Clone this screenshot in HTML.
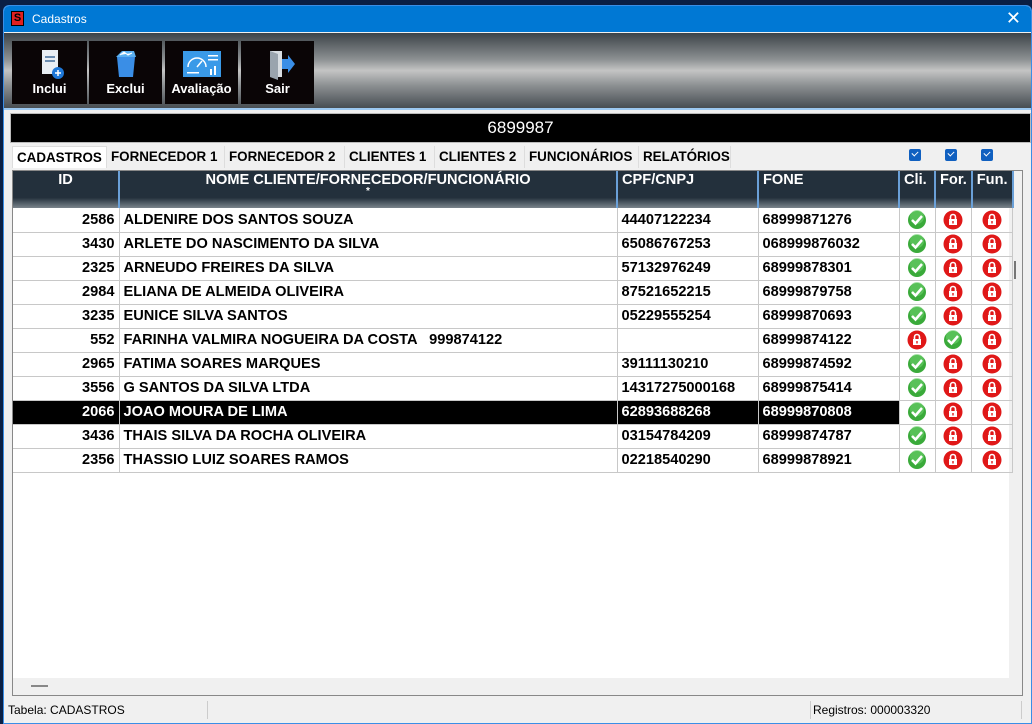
<!DOCTYPE html>
<html><head><meta charset="utf-8"><style>
*{margin:0;padding:0;box-sizing:border-box}
body{width:1032px;height:724px;background:#0a1f44;position:relative;overflow:hidden;font-family:"Liberation Sans",sans-serif}
.win{position:absolute;left:3px;top:5px;width:1029px;height:719px;background:#f0f0f0;border:1px solid #3a8ee6;border-radius:6px 6px 0 0;overflow:hidden}
.title{position:absolute;left:0;top:0;right:0;height:26px;background:#0078d4;color:#fff;font-size:12px}
.title span{position:absolute;left:28px;top:6px}
.logo{position:absolute;left:7px;top:5px;width:13px;height:15px;background:#e02020;border:1px solid #000;color:#000;font-size:11px;font-weight:bold;text-align:center;line-height:13px}
.close{position:absolute;right:10px;top:2px;font-size:18px;color:#fff}
.tb{position:absolute;left:0;top:27px;width:1027px;height:77px;background:linear-gradient(#3c4348,#8c9092 35%,#c4c4c4 50%,#8c9092 70%,#474d52);border-bottom:2px solid #9cc8f0}
.btn{position:absolute;top:8px;height:63px;background:#0a0506;color:#fff;font-weight:bold;font-size:13px;text-align:center}
.btn b{position:absolute;bottom:8px;left:0;right:0}
.btn svg{position:absolute;top:8px;left:50%;margin-left:-18px}
.bar{position:absolute;left:6px;top:107px;width:1021px;height:30px;background:#000;border:1px solid #bbb;color:#fff;font-size:17px;text-align:center;line-height:28px}
.tabs{position:absolute;left:8px;top:140px;height:22px;font-size:13.4px;font-weight:bold;color:#000}
.tab{position:absolute;top:0;height:22px;background:#f0f0f0;border-right:1px solid #ddd;line-height:22px;padding-left:4px;white-space:nowrap}
.chk{position:absolute;top:143px;width:12px;height:12px;background:#1060c0;border-radius:2px}
.chk:after{content:"";position:absolute;left:3px;top:2px;width:5px;height:3px;border-left:1.5px solid #fff;border-bottom:1.5px solid #fff;transform:rotate(-45deg)}
.grid{position:absolute;left:8px;top:164px;width:1011px;height:526px;background:#f0f0f0;border:1px solid #888}
.white{position:absolute;left:0;top:0;width:996px;height:507px;background:#fff}
table{position:absolute;left:0;top:0;border-collapse:collapse;table-layout:fixed;font-size:14.6px;font-weight:bold}
th{background:linear-gradient(#23303c 72%,#7a848c);color:#fff;height:37px;vertical-align:top;text-align:left;padding:1px 4px;border-right:2px solid #6aa0d8;font-size:14.6px;position:relative;font-weight:bold}
td{height:24px;border-right:1px solid #c8c8c8;border-bottom:1px solid #c8c8c8;padding:0 4px;white-space:nowrap;overflow:hidden}
td.r{text-align:right}
td.c{text-align:center;padding:0}
tr.sel td:nth-child(-n+4){background:#000;color:#fff}
td svg{vertical-align:middle}
.sb{position:absolute;left:4px;top:697px;font-size:12px;color:#000}
.sep{position:absolute;top:695px;width:1px;height:18px;background:#ccc}
</style></head><body>
<div class="win">
<div class="title"><div class="logo">S</div><span>Cadastros</span><div class="close">✕</div></div>
<div class="tb">
 <div class="btn" style="left:8px;width:75px"><svg width="36" height="32"><rect x="10" y="1" width="16" height="24" fill="#e8eef4"/><rect x="13" y="7" width="10" height="2" fill="#6a8cb0"/><rect x="13" y="11" width="10" height="2" fill="#6a8cb0"/><circle cx="26" cy="24" r="6" fill="#1e78d8"/><path d="M23 24h6M26 21v6" stroke="#fff" stroke-width="1.5"/></svg><b>Inclui</b></div>
 <div class="btn" style="left:85px;width:73px"><svg width="36" height="32"><path d="M9 8h18l-2 20H11z" fill="#3a8ee6"/><path d="M8 8l6-6h12l2 6" fill="#5ab0f0"/><path d="M12 6l4-3 4 3 4-2" stroke="#fff" fill="#fff"/></svg><b>Exclui</b></div>
 <div class="btn" style="left:161px;width:73px"><svg width="40" height="30" style="margin-left:-20px"><rect x="1" y="2" width="38" height="26" fill="#3a9ae8"/><path d="M6 18a9 9 0 0 1 18 0" stroke="#fff" fill="none" stroke-width="1.5"/><path d="M15 18l5-6" stroke="#fff" stroke-width="1.5"/><rect x="26" y="6" width="10" height="1.5" fill="#fff"/><rect x="26" y="10" width="10" height="1.5" fill="#fff"/><rect x="28" y="20" width="2" height="6" fill="#fff"/><rect x="32" y="17" width="2" height="9" fill="#fff"/><rect x="5" y="23" width="12" height="1.5" fill="#fff"/></svg><b>Avaliação</b></div>
 <div class="btn" style="left:237px;width:73px"><svg width="36" height="32"><path d="M10 2h12v26H10z" fill="#d8dde2"/><path d="M10 2l8 3v26l-8-3z" fill="#9aa4ae"/><path d="M22 10h6v-4l7 9-7 9v-4h-6z" fill="#3a8ee6"/></svg><b>Sair</b></div>
</div>
<div class="bar">6899987</div>
<div class="tabs">
 <div class="tab" style="left:0;width:95px;background:#fff;border:1px solid #ddd;border-bottom:none">CADASTROS</div>
 <div class="tab" style="left:95px;width:118px">FORNECEDOR 1</div>
 <div class="tab" style="left:213px;width:120px">FORNECEDOR 2</div>
 <div class="tab" style="left:333px;width:90px">CLIENTES 1</div>
 <div class="tab" style="left:423px;width:90px">CLIENTES 2</div>
 <div class="tab" style="left:513px;width:114px">FUNCIONÁRIOS</div>
 <div class="tab" style="left:627px;width:92px">RELATÓRIOS</div>
</div>
<div class="chk" style="left:905px"></div><div class="chk" style="left:941px"></div><div class="chk" style="left:977px"></div>
<div class="grid">
<div class="white"></div>
<table>
<colgroup><col style="width:106px"><col style="width:498px"><col style="width:141px"><col style="width:141px"><col style="width:36px"><col style="width:36px"><col style="width:36px"></colgroup>
<tr><th style="text-align:center">ID</th><th style="text-align:center">NOME CLIENTE/FORNECEDOR/FUNCIONÁRIO<div style="font-size:10px;line-height:8px">*</div></th><th>CPF/CNPJ</th><th>FONE</th><th>Cli.</th><th>For.</th><th>Fun.</th></tr>
<tbody id="b"></tbody>
</table>
</div>
<div style="position:absolute;left:27px;top:679px;width:17px;height:2px;background:#888"></div>
<div class="sb">Tabela: CADASTROS</div>
<div class="sep" style="left:203px"></div><div class="sep" style="left:806px"></div><div class="sep" style="left:1017px"></div>
<div class="sb" style="left:809px">Registros: 000003320</div>
<div style="position:absolute;left:1010px;top:255px;width:2px;height:18px;background:#777"></div>
</div>
<script>
var G='<svg width="20" height="20"><circle cx="10" cy="10" r="9" fill="#3aaa3a"/><circle cx="10" cy="7" r="7" fill="#6cd06c" opacity=".6"/><path d="M5 10l3.5 3.5L15 6" stroke="#fff" stroke-width="2.5" fill="none"/></svg>';
var R='<svg width="20" height="20"><circle cx="10" cy="10" r="9.5" fill="#e01818"/><path d="M7.5 9V7a2.5 2.5 0 0 1 5 0v2" stroke="#fff" stroke-width="1.6" fill="none"/><rect x="6" y="9" width="8" height="6" fill="#fff"/><rect x="9.3" y="11" width="1.4" height="2.5" fill="#e01818"/></svg>';
var d=[["2586","ALDENIRE DOS SANTOS SOUZA","44407122234","68999871276",G,R,R],
["3430","ARLETE DO NASCIMENTO DA SILVA","65086767253","068999876032",G,R,R],
["2325","ARNEUDO FREIRES DA SILVA","57132976249","68999878301",G,R,R],
["2984","ELIANA DE ALMEIDA OLIVEIRA","87521652215","68999879758",G,R,R],
["3235","EUNICE SILVA SANTOS","05229555254","68999870693",G,R,R],
["552","FARINHA VALMIRA NOGUEIRA DA COSTA &nbsp; 999874122","","68999874122",R,G,R],
["2965","FATIMA SOARES MARQUES","39111130210","68999874592",G,R,R],
["3556","G SANTOS DA SILVA LTDA","14317275000168","68999875414",G,R,R],
["2066","JOAO MOURA DE LIMA","62893688268","68999870808",G,R,R],
["3436","THAIS SILVA DA ROCHA OLIVEIRA","03154784209","68999874787",G,R,R],
["2356","THASSIO LUIZ SOARES RAMOS","02218540290","68999878921",G,R,R]];
var h='';d.forEach(function(r){h+='<tr'+(r[0]=="2066"?' class="sel"':'')+'><td class="r">'+r[0]+'</td><td>'+r[1]+'</td><td>'+r[2]+'</td><td>'+r[3]+'</td><td class="c">'+r[4]+'</td><td class="c">'+r[5]+'</td><td class="c">'+r[6]+'</td></tr>'});
document.getElementById('b').innerHTML=h;
</script>
</body></html>
